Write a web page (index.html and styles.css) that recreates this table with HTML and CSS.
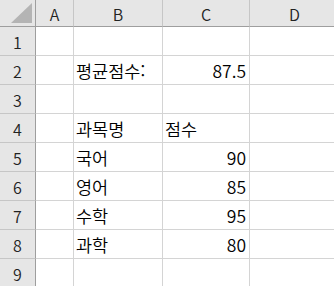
FILE: index.html
```html
<!DOCTYPE html>
<html lang="ko">
<head>
<meta charset="utf-8">
<link rel="stylesheet" href="styles.css">
</head>
<body>
<div class="sheet">
  <div class="corner"><span class="tri"></span></div>
  <div class="colh">A</div>
  <div class="colh">B</div>
  <div class="colh">C</div>
  <div class="colh last">D</div>

  <div class="rowh">1</div><div class="cell"></div><div class="cell"></div><div class="cell"></div><div class="cell"></div>
  <div class="rowh">2</div><div class="cell"></div><div class="cell">평균점수:</div><div class="cell num">87.5</div><div class="cell"></div>
  <div class="rowh">3</div><div class="cell"></div><div class="cell"></div><div class="cell"></div><div class="cell"></div>
  <div class="rowh">4</div><div class="cell"></div><div class="cell">과목명</div><div class="cell">점수</div><div class="cell"></div>
  <div class="rowh">5</div><div class="cell"></div><div class="cell">국어</div><div class="cell num">90</div><div class="cell"></div>
  <div class="rowh">6</div><div class="cell"></div><div class="cell">영어</div><div class="cell num">85</div><div class="cell"></div>
  <div class="rowh">7</div><div class="cell"></div><div class="cell">수학</div><div class="cell num">95</div><div class="cell"></div>
  <div class="rowh">8</div><div class="cell"></div><div class="cell">과학</div><div class="cell num">80</div><div class="cell"></div>
  <div class="rowh">9</div><div class="cell"></div><div class="cell"></div><div class="cell"></div><div class="cell"></div>
</div>
</body>
</html>
```
FILE: styles.css
```css
html, body {
  margin: 0;
  padding: 0;
  background: #ffffff;
}
body {
  width: 334px;
  height: 286px;
  overflow: hidden;
  font-family: "Noto Sans CJK KR", "Noto Sans", sans-serif;
  font-weight: 350;
}
.sheet {
  display: grid;
  grid-template-columns: 36px 38px 89px 87px 90px;
  grid-template-rows: 27px repeat(9, 29px);
}
.sheet > div {
  box-sizing: border-box;
  border-right: 1px solid #d4d4d4;
  border-bottom: 1px solid #d4d4d4;
}
.corner {
  background: #e6e6e6;
  position: relative;
  border-right-color: #9e9e9e !important;
  border-bottom-color: #9e9e9e !important;
}
.tri {
  position: absolute;
  left: 11px;
  top: 3px;
  width: 21px;
  height: 20px;
  background: #b4b4b4;
  clip-path: polygon(100% 0, 100% 100%, 0 100%);
}
.colh {
  background: #e6e6e6;
  border-right-color: #c6c6c6 !important;
  border-bottom-color: #9e9e9e !important;
  display: flex;
  align-items: center;
  justify-content: center;
  font-size: 16px;
  color: #222222;
  padding-top: 1px;
}
.rowh {
  background: #e6e6e6;
  border-right-color: #9e9e9e !important;
  border-bottom-color: #c6c6c6 !important;
  display: flex;
  align-items: center;
  justify-content: center;
  font-size: 16px;
  color: #222222;
  padding-top: 2px;
}
.cell {
  display: flex;
  align-items: flex-end;
  padding: 0 3px 1px 2px;
  font-size: 17.5px;
  line-height: 24px;
  color: #000000;
  white-space: nowrap;
}
.num {
  justify-content: flex-end;
}
```
